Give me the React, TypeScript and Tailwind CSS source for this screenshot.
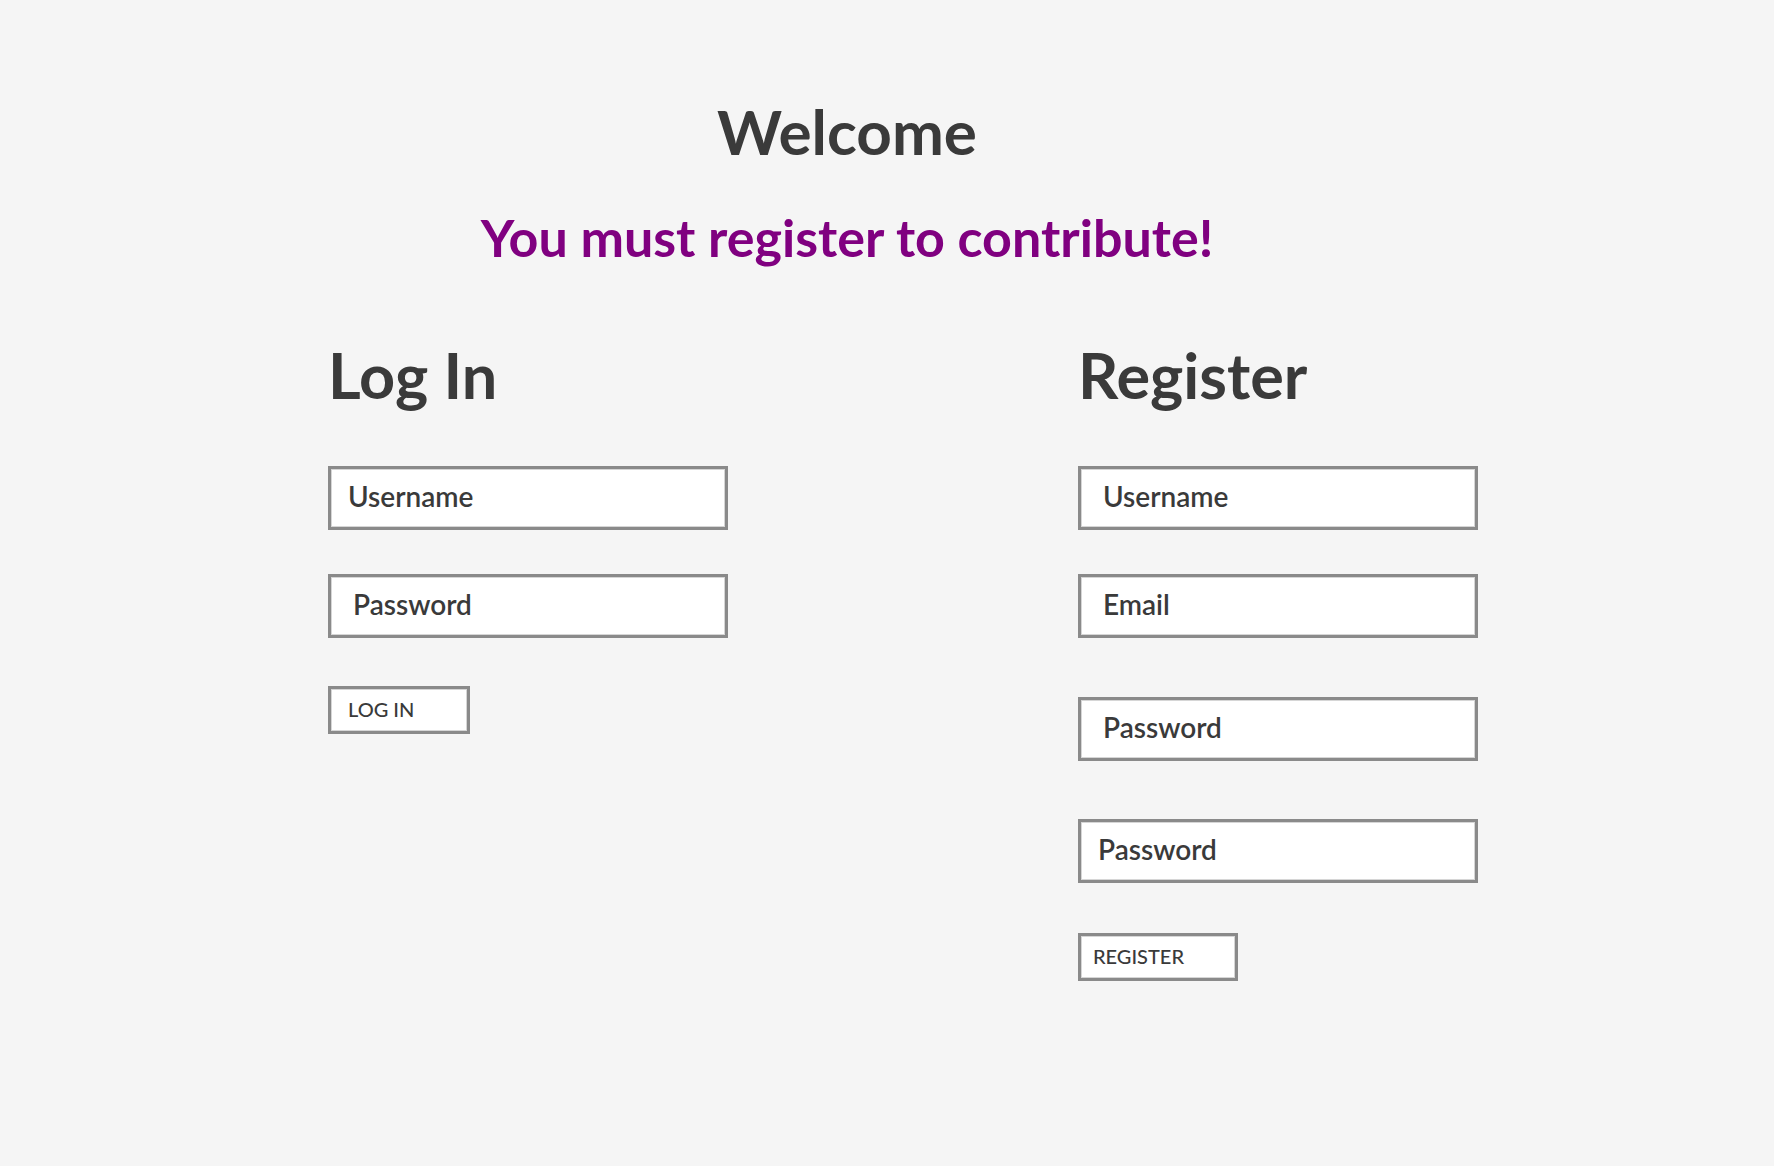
import React from "react";

const FONT = { fontFamily: "Lato, 'Open Sans', sans-serif" };

interface FieldProps {
  placeholder: string;
  type?: string;
  className?: string;
}

function Field({ placeholder, type = "text", className = "" }: FieldProps) {
  return (
    <input
      type={type === "password" ? "text" : type}
      placeholder={placeholder}
      className={
        "block h-16 w-[400px] border-[3px] border-[#8a8a8a] bg-white pb-1 text-[28px] font-semibold text-[#3a3a3a] shadow-[inset_0_0_0_1px_#d6d6d6] outline-none placeholder:text-[#3a3a3a] " +
        className
      }
      style={FONT}
    />
  );
}

function SubmitButton({ label, className = "" }: { label: string; className?: string }) {
  return (
    <button
      type="button"
      className={
        "block h-12 border-[3px] border-[#8a8a8a] bg-white pb-0.5 text-left text-[20px] font-medium text-[#3a3a3a] shadow-[inset_0_0_0_1px_#d6d6d6] " +
        className
      }
      style={FONT}
    >
      {label}
    </button>
  );
}

export default function App() {
  return (
    <div className="min-h-[1166px] w-full bg-[#f5f5f5] text-[#3a3a3a]" style={FONT}>
      <div className="pl-[328px] pt-[100px]">
        {/* Header */}
        <div className="w-[1038px] text-center">
          <h1 className="text-[62px] font-bold leading-none">Welcome</h1>
          <h2 className="mt-[49px] text-[52px] font-bold leading-none text-[#800080]">
            You must register to contribute!
          </h2>
        </div>

        {/* Forms */}
        <div className="mt-[80px] flex">
          <form className="w-[750px]">
            <h2 className="text-[63px] font-bold leading-none">Log In</h2>
            <Field placeholder="Username" className="mt-[60px] pl-[17px]" />
            <Field placeholder="Password" type="password" className="mt-[44px] pl-[22px]" />
            <SubmitButton label="LOG IN" className="mt-[48px] w-[142px] pl-[17px]" />
          </form>

          <form className="w-[400px]">
            <h2 className="text-[63px] font-bold leading-none">Register</h2>
            <Field placeholder="Username" className="mt-[60px] pl-[22px]" />
            <Field placeholder="Email" type="email" className="mt-[44px] pl-[22px]" />
            <Field placeholder="Password" type="password" className="mt-[59px] pl-[22px]" />
            <Field placeholder="Password" type="password" className="mt-[58px] pl-[17px]" />
            <SubmitButton label="REGISTER" className="mt-[50px] w-[160px] pl-[12px]" />
          </form>
        </div>
      </div>
    </div>
  );
}
